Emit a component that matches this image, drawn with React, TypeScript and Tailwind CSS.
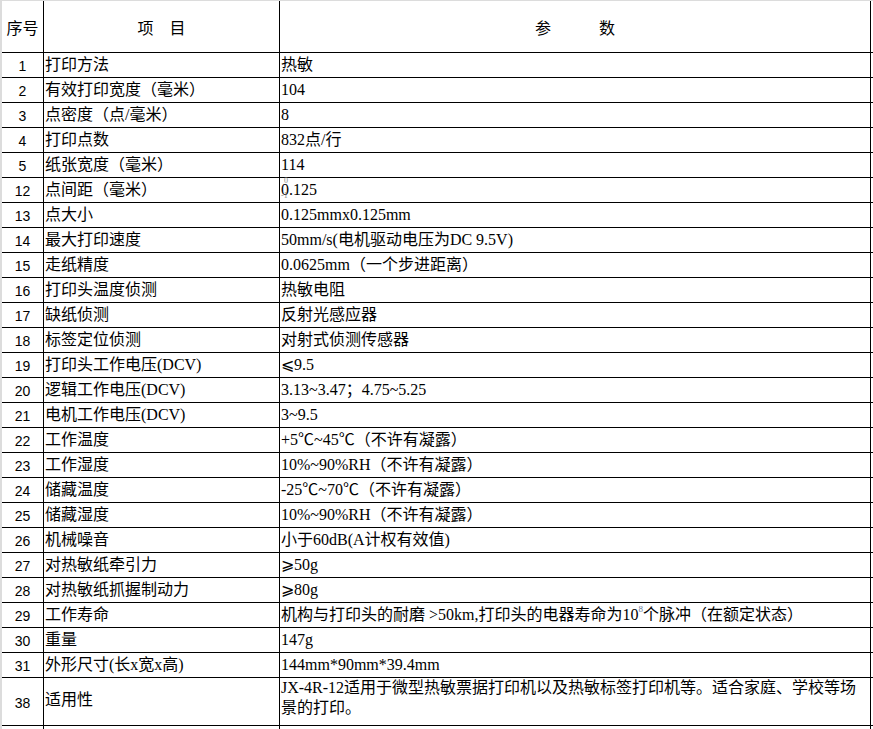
import type { ReactNode } from "react";

type Row = {
  no: string;
  item: string;
  value: ReactNode;
  tall?: boolean;
};

const rows: Row[] = [
  { no: "1", item: "打印方法", value: "热敏" },
  { no: "2", item: "有效打印宽度（毫米）", value: "104" },
  { no: "3", item: "点密度（点/毫米）", value: "8" },
  { no: "4", item: "打印点数", value: "832点/行" },
  { no: "5", item: "纸张宽度（毫米）", value: "114" },
  {
    no: "12",
    item: "点间距（毫米）",
    value: (
      <>
        <span className="relative">
          0
          <span className="absolute left-[3px] top-[-1px] text-[8px] leading-none text-[#8a8a8a]">
            0
          </span>
          <span className="absolute left-0 top-[14px] text-[8px] leading-none text-[#8a8a8a]">
            -1
          </span>
        </span>
        .125
      </>
    ),
  },
  { no: "13", item: "点大小", value: "0.125mmx0.125mm" },
  { no: "14", item: "最大打印速度", value: "50mm/s(电机驱动电压为DC 9.5V)" },
  { no: "15", item: "走纸精度", value: "0.0625mm（一个步进距离）" },
  { no: "16", item: "打印头温度侦测", value: "热敏电阻" },
  { no: "17", item: "缺纸侦测", value: "反射光感应器" },
  { no: "18", item: "标签定位侦测", value: "对射式侦测传感器" },
  { no: "19", item: "打印头工作电压(DCV)", value: "⩽9.5" },
  { no: "20", item: "逻辑工作电压(DCV)", value: "3.13~3.47；4.75~5.25" },
  { no: "21", item: "电机工作电压(DCV)", value: "3~9.5" },
  { no: "22", item: "工作温度", value: "+5℃~45℃（不许有凝露）" },
  { no: "23", item: "工作湿度", value: "10%~90%RH（不许有凝露）" },
  { no: "24", item: "储藏温度", value: "-25℃~70℃（不许有凝露）" },
  { no: "25", item: "储藏湿度", value: "10%~90%RH（不许有凝露）" },
  { no: "26", item: "机械噪音", value: "小于60dB(A计权有效值)" },
  { no: "27", item: "对热敏纸牵引力", value: "⩾50g" },
  { no: "28", item: "对热敏纸抓握制动力", value: "⩾80g" },
  {
    no: "29",
    item: "工作寿命",
    value: (
      <>
        机构与打印头的耐磨 &gt;50km,打印头的电器寿命为10
        <span className="relative top-[-6px] text-[9px] text-[#6b7a99]">8</span>
        个脉冲（在额定状态）
      </>
    ),
  },
  { no: "30", item: "重量", value: "147g" },
  { no: "31", item: "外形尺寸(长x宽x高)", value: "144mm*90mm*39.4mm" },
  {
    no: "38",
    item: "适用性",
    tall: true,
    value: (
      <>
        JX-4R-12适用于微型热敏票据打印机以及热敏标签打印机等。适合家庭、学校等场
        <br />
        景的打印。
      </>
    ),
  },
];

function SpecRow({ no, item, value, tall }: Row) {
  return (
    <div
      className={
        tall
          ? "flex h-[48px] border-b border-black"
          : "flex h-[25px] border-b border-black"
      }
    >
      <div className="flex w-[41px] items-center justify-center pt-[2px] font-['Liberation_Sans',sans-serif] text-[14px]">
        {no}
      </div>
      <div
        className={
          tall
            ? "flex w-[236px] items-center border-l border-black pb-[4px] pl-[1px]"
            : "flex w-[236px] items-center border-l border-black pl-[1px]"
        }
      >
        {item}
      </div>
      <div
        className={
          tall
            ? "w-[592px] whitespace-nowrap border-x border-black pl-[1px] leading-[20px]"
            : "flex w-[592px] items-center whitespace-nowrap border-x border-black pl-[1px]"
        }
      >
        {tall ? <div>{value}</div> : value}
      </div>
    </div>
  );
}

export default function App() {
  return (
    <div className="h-[729px] w-[873px] overflow-hidden border-l-2 border-t border-[#dcdcdc] bg-white font-['Liberation_Serif','Noto_Sans_CJK_SC',serif] text-[16px] leading-[24px] text-black">
      <div className="flex h-[52px] border-b border-black">
        <div className="flex w-[41px] items-center justify-center pt-[4px]">
          序号
        </div>
        <div className="flex w-[236px] items-center justify-center gap-[16px] border-l border-black pt-[4px]">
          <span>项</span>
          <span>目</span>
        </div>
        <div className="flex w-[592px] items-center justify-center gap-[48px] border-x border-black pt-[4px]">
          <span>参</span>
          <span>数</span>
        </div>
      </div>
      {rows.map((row) => (
        <SpecRow key={row.no} {...row} />
      ))}
      <div className="flex h-[20px]">
        <div className="w-[41px]" />
        <div className="w-[236px] border-l border-black" />
        <div className="w-[592px] border-x border-black" />
      </div>
    </div>
  );
}
